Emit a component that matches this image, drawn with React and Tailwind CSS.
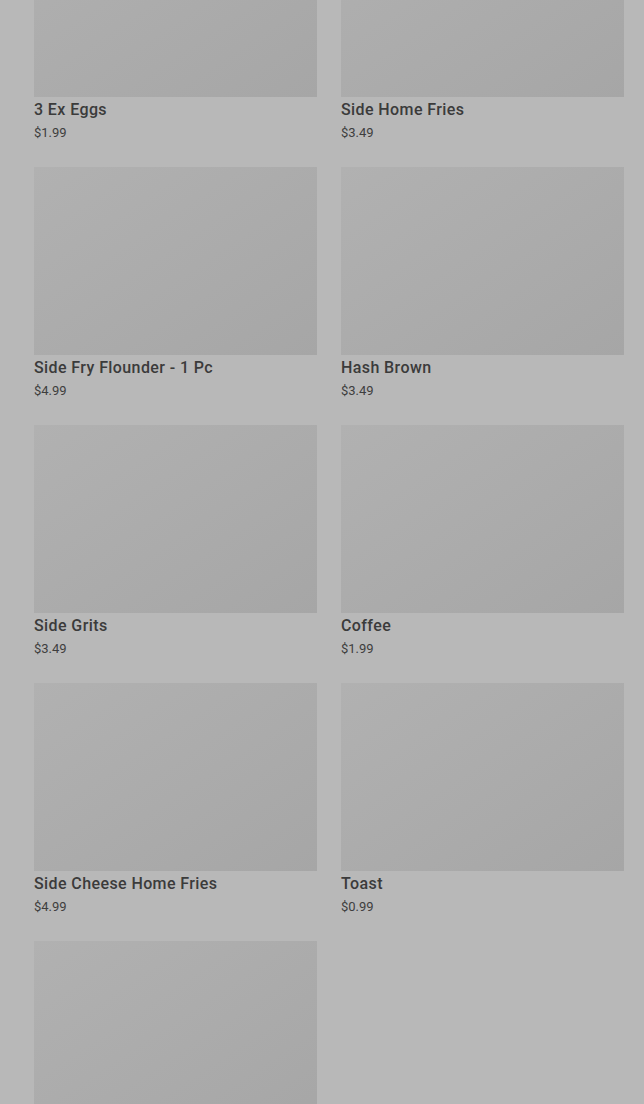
import React from 'react';

const items = [
  { name: '3 Ex Eggs', price: '$1.99' },
  { name: 'Side Home Fries', price: '$3.49' },
  { name: 'Side Fry Flounder - 1 Pc', price: '$4.99' },
  { name: 'Hash Brown', price: '$3.49' },
  { name: 'Side Grits', price: '$3.49' },
  { name: 'Coffee', price: '$1.99' },
  { name: 'Side Cheese Home Fries', price: '$4.99' },
  { name: 'Toast', price: '$0.99' },
  // last card is cut off by the fold, only the picture shows
  { name: '', price: '' },
];

const MenuCard = ({ item }) => (
  <div className="flex flex-col">
    <div className="h-[188px] bg-gradient-to-br from-[#b1b1b1] to-[#a6a6a6]" />
    <div className="mt-px h-[24px] text-[16px] leading-[24px] font-medium tracking-[0.4px] text-[#3b3b3b] whitespace-nowrap">{item.name}</div>
    <div className="mt-px h-[20px] text-[13px] leading-[20px] text-[#3e3e3e]">{item.price}</div>
  </div>
);

const App = () => {
  return (
    <div className="h-[1104px] overflow-hidden bg-[#b8b8b8]" style={{ fontFamily: 'Roboto, "Liberation Sans", sans-serif' }}>
      <div className="-mt-[91px] pl-[34px] pr-[20px] grid grid-cols-2 gap-x-[24px] gap-y-[24px]">
        {items.map((item, i) => (
          <MenuCard key={i} item={item} />
        ))}
      </div>
    </div>
  );
};

export default App;
